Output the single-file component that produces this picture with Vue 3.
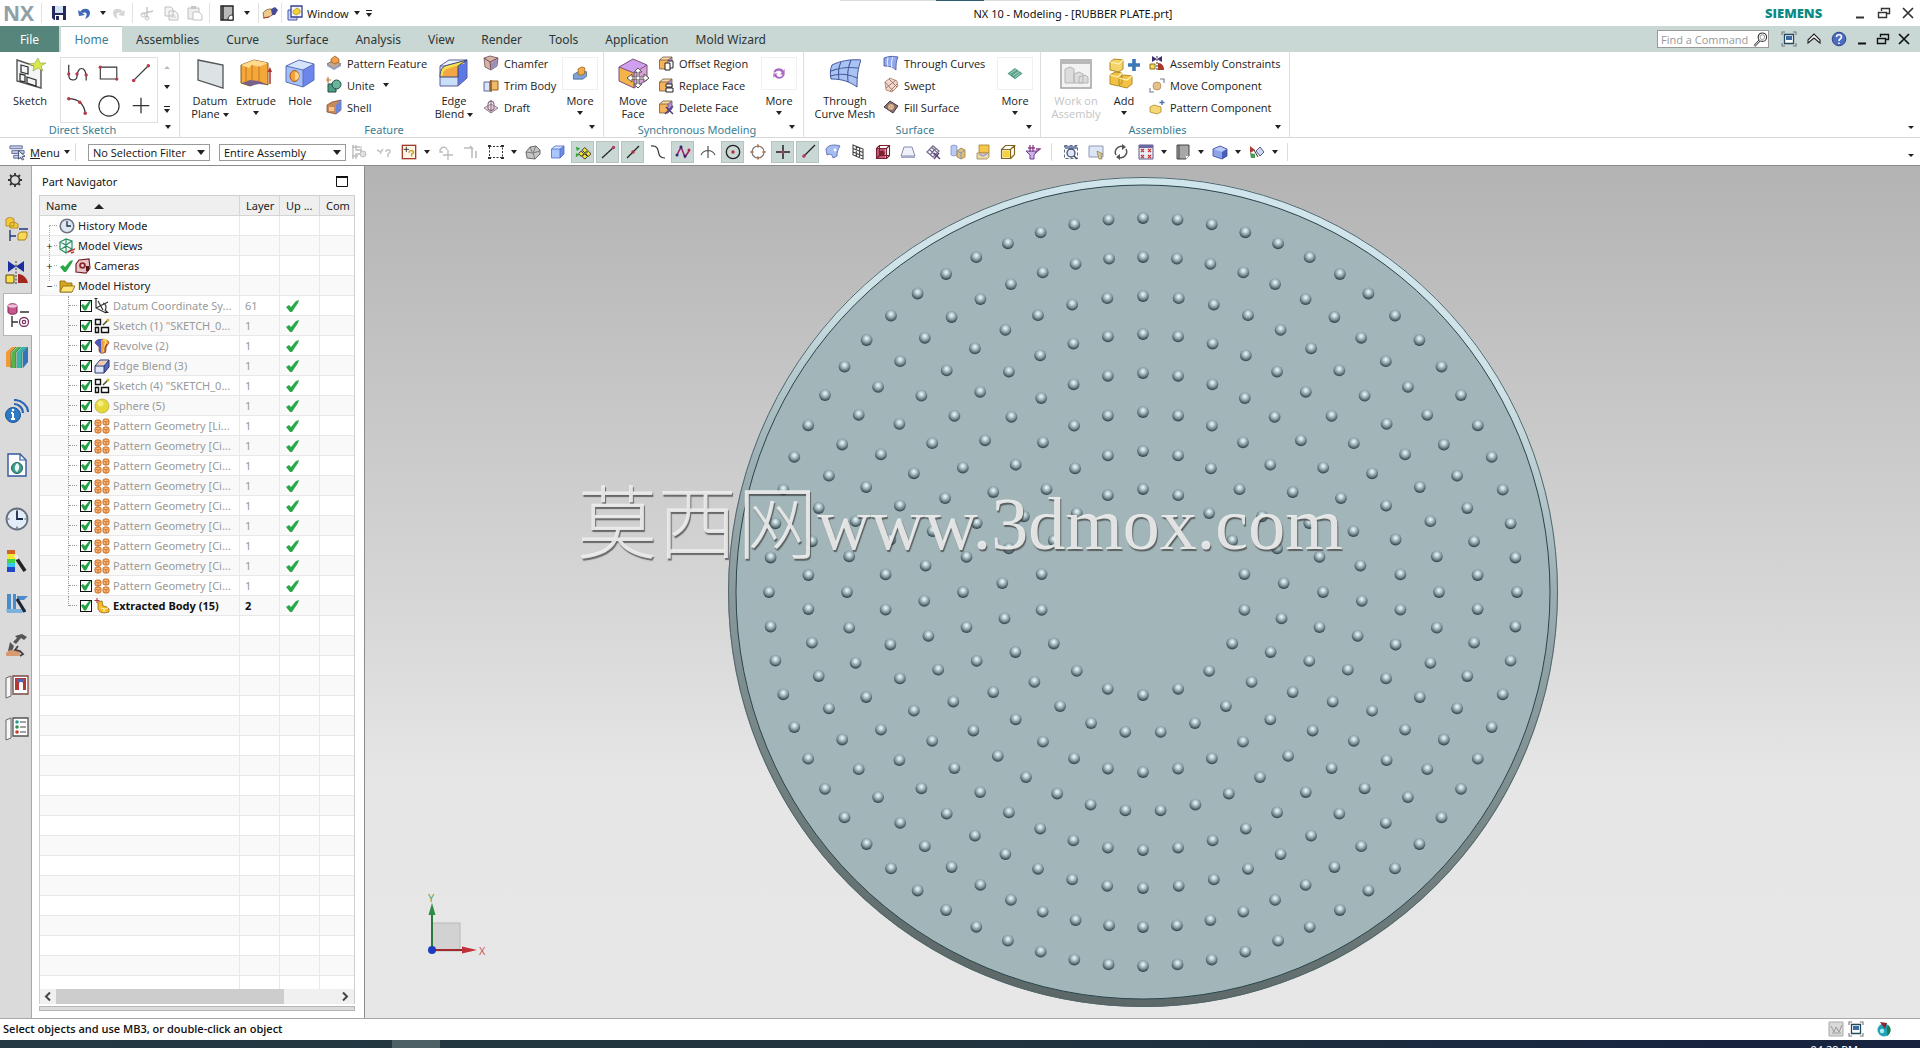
<script setup>
import { h } from 'vue'

const cube = (l, f, r, s = '#5b5f9c') =>
  `<path d="M2 9 11 3h18v18l-9 8H2z" fill="${f}"/><path d="M2 9 11 3h18l-9 6z" fill="${l}"/><path d="M20 9l9-6v18l-9 8z" fill="${r}"/><path d="M2 9 11 3h18v18l-9 8H2zM2 9h18v20M20 9l9-6" fill="none" stroke="${s}" stroke-width="1"/>`
const small = (l, f, r, s = '#6b5a4a') =>
  `<path d="M1.500 5 5 2h9v8l-4 4H1.500z" fill="${f}"/><path d="M1.500 5 5 2h9l-4 3z" fill="${l}"/><path d="M10 5l4-3v8l-4 4z" fill="${r}"/><path d="M1.500 5 5 2h9v8l-4 4H1.500zM1.500 5H10v9M10 5l4-3" fill="none" stroke="${s}" stroke-width=".8"/>`
const st = (c, w = 1) => `fill="none" stroke="${c}" stroke-width="${w}"`
const patternBlob = (x, y) =>
  `<rect x="${x}" y="${y}" width="6" height="6" rx="2" fill="#f9b878" stroke="#c8681c" stroke-width="1"/><path d="M${x + 1} ${y + 2}l2 1 2-1M${x + 3} ${y + 3}v3" ${st('#c8681c', .8)}/>`

// [viewBox size, markup]
const icons = {
  save: [16, `<path d="M1 1h14v14H3l-2-2z" fill="#252a5c"/><path d="M4 1h8v7H4z" fill="#d5e2f5"/><path d="M4 10h8v5H4z" fill="#fff"/><path d="M5 11h3v4H5z" fill="#252a5c"/>`],
  undo: [16, `<path d="M3 7c3-5 10-4 10 1 0 3-2 5-5 6 2-3 3-8-2-6z" fill="#3c66b8"/><path d="M1 5l1 6 6-1z" fill="#3c66b8"/>`],
  redo: [16, `<path d="M13 7c-3-5-10-4-10 1 0 3 2 5 5 6-2-3-2-7 2-6z" fill="#d5d5d5"/><path d="M15 5l-1 6-6-1z" fill="#d5d5d5"/>`],
  cut: [16, `<path d="M2 9l12-3M8 2v11" ${st('#c6c6c6', 1.5)}/><circle cx="4" cy="10" r="2" ${st('#c6c6c6')}/><circle cx="8" cy="13" r="2" ${st('#c6c6c6')}/>`],
  copy: [16, `<path d="M2 2h6l2 2v7H2zM6 6h6l3 3v6H6z" fill="#f5f5f5" stroke="#c0c0c0"/><path d="M8 10h4M8 12h5" ${st('#ccc')}/>`],
  paste: [16, `<path d="M1 3h11v11H1z" fill="#eee" stroke="#c0c0c0"/><path d="M4 1h5v3H4z" fill="#c6c6c6"/><path d="M6 7h6l3 3v5H6z" fill="#fff" stroke="#c0c0c0"/>`],
  book: [16, `<path d="M2 1h12v14H2z" fill="#b9b9b9" stroke="#222" stroke-width="1.400"/><path d="M4 1v14" stroke="#222" stroke-width="1.400"/><path d="M9 15c0-3 1-5 5-5v5z" fill="#fff" stroke="#222"/>`],
  hand: [16, `<path d="M1 8c2-3 5-4 8-4l3 5-5 3-5 1z" fill="#efc98d" stroke="#7a5b30" stroke-width=".8"/><path d="M9 4l4-2 3 3-3 5-3 0z" fill="#4a4a9a"/><path d="M1 13l6-1" stroke="#b04040"/>`],
  window: [16, `<path d="M1 5h9v10H1z" fill="#cdd6ff" stroke="#4655a8"/><path d="M4 1h11v11H4z" fill="#f4f4ff" stroke="#34408c" stroke-width="1.300"/><path d="M6 6l4-3 3 2v3l-4 2-3-2z" fill="#f4d531" stroke="#a98a10" stroke-width=".7"/>`],
  menu: [18, `<path d="M1 2h13v3H1zM3 7h13v3H3zM5 12h8v3H5z" fill="#c4d0ea" stroke="#5b6a94"/><path d="M10 7l7 6-3 .4 1.500 3-1.500.6-1.600-3L10 16z" fill="#e9eef9" stroke="#36435f" stroke-width=".9"/>`],
  grayA: [16, `<path d="M2 1v14M5 1v5h5v4H5v5M1 3h8M1 12h6" ${st('#bdbdbd', 1.4)}/><circle cx="12" cy="10" r="3" fill="#e0e0e0" stroke="#bdbdbd"/><path d="M10 2v5" ${st('#bdbdbd')}/>`],
  grayB: [16, `<path d="M1 6l4 2 2-3M5 8l-1 2M10 8c0-3 5-3 4 0l-2 2v3" ${st('#c4c4c4', 1.5)}/>`],
  picked: [18, `<rect x="1.500" y="1.500" width="15" height="15" fill="#fdf6e7" stroke="#a03c2a" stroke-width="1.500"/><path d="M6 3v6M3 6h6" ${st('#333')}/><path d="M9 10c0-4 6-3 5 0l-2 1v3" ${st('#c8a030', 1.6)}/>`],
  grayPlus: [16, `<path d="M2 8c0-6 7-6 7-2M2 5v3h3M10 6v10M5 11h10" ${st('#bcbcbc', 1.3)}/>`],
  grayBars: [16, `<path d="M1 4h8l-2-2M9 4v3M9 7v7M13 7v7" ${st('#bcbcbc', 1.6)}/>`],
  marquee: [16, `<rect x="1.500" y="2.500" width="13" height="11" fill="none" stroke="#333" stroke-dasharray="2 1.500"/><path d="M0 1h3v2H0zM13 1h3v2h-3zM0 13h3v2H0zM13 13h3v2h-3z" fill="#333"/>`],
  lump: [16, `<path d="M1 8l4-5 6-1 4 4v4l-5 5-8-1z" fill="#c4c4c4" stroke="#5e5e5e" stroke-width=".9"/><path d="M1 8l7 1 3-7M8 9l2 6M8 9l7-2M5 3l2 5" ${st('#5e5e5e', .7)}/>`],
  blueCube: [16, small('#d8e6ff', '#a9c6ff', '#6d8cea', '#4a69c4')],
  snap: [18, `<path d="M1 3l5 2-4 3zM1 10l4 2-4 3z" fill="#2ea836"/><path d="M11 4l3 3-3 3-3-3zM7 8l3 3-3 3-3-3zM15 8l3 3-3 3-3-3zM11 11l3 3-3 3-3-3z" fill="#f6e52c" stroke="#222" stroke-width="1"/>`],
  seg: [16, `<path d="M2 14L14 3" ${st('#222', 1.2)}/><circle cx="13.500" cy="3.500" r="1.700" fill="#b04060"/>`],
  mid: [16, `<path d="M2 14L14 2" ${st('#222', 1.2)}/><circle cx="8" cy="8" r="1.700" fill="#b03040"/>`],
  scurve: [16, `<path d="M1 2c12-1 3 12 14 12" ${st('#333', 1.2)}/>`],
  spline: [16, `<path d="M2 11L6 3l4 10 4-6" ${st('#a02070', 1.6)}/><circle cx="2" cy="11" r="1.500" fill="#2b2b7a"/><circle cx="6" cy="3" r="1.500" fill="#2b2b7a"/><circle cx="10" cy="12" r="1.500" fill="#2b2b7a"/><circle cx="14" cy="6" r="1.500" fill="#b02050"/>`],
  inter: [16, `<path d="M1 11c3-6 11-6 14 0M8 2v12" ${st('#444', 1.1)}/>`],
  target: [16, `<circle cx="8" cy="8" r="6.700" ${st('#222', 1.3)}/><circle cx="8" cy="8" r="1.700" fill="#b03040"/>`],
  quad: [16, `<circle cx="8" cy="8" r="6" ${st('#777', 1.2)}/><path d="M8 .5v3M8 12.500v3M.5 8h3M12.500 8h3" ${st('#b87858', 2)}/>`],
  plus: [16, `<path d="M8 1v14M1 8h14" ${st('#222', 1.5)}/><circle cx="8" cy="8" r="1.500" fill="#b04060"/>`],
  onCurve: [16, `<path d="M3 13L15 1" ${st('#222', 1.2)}/><circle cx="4" cy="12" r="1.800" fill="#b04060"/>`],
  sheet: [16, `<path d="M1 5c2-4 8-5 14-3-2 3-3 6-3 10l-4 2c0-3-3-5-6-3z" fill="#a7bcf0" stroke="#5a6db0" stroke-width=".9"/><circle cx="10" cy="6" r="1.400" fill="#fff"/>`],
  mesh: [16, `<path d="M3 1l10 4v10L3 11zM6.300 2.500v10M9.600 4v10M3 4.500l10 4M3 8l10 4" ${st('#444', 1.1)}/>`],
  box: [16, `<path d="M1.500 4.500h9v10h-9z" fill="#c35a78"/><path d="M1.500 4.500h10v10h-10zM4.500 1.500h10v10h-10zM1.500 4.500l3-3M11.500 4.500l3-3M1.500 14.500l3-3M11.500 14.500l3-3" ${st('#7a2030', 1.1)}/><circle cx="7" cy="9" r="2.500" fill="#7a2030"/>`],
  slab: [16, `<path d="M4 3h8l3 9H1z" fill="#eef0fa" stroke="#8a8fae"/><path d="M1 12h14v2H1z" fill="#a6abca"/>`],
  weave: [16, `<path d="M2 8l6-6 6 5-6 6zM4 5l7 7M6 3l7 6M5 11l6-7" ${st('#7b6f92', 1.3)}/><path d="M9 9l6 6M14 9l-5 6" ${st('#5a3d77', 1.3)}/>`],
  blocks: [16, `<path d="M1 2l3-1 3 1v9l-3 1-3-1z" fill="#b9caf5" stroke="#7d8fc8" stroke-width=".8"/><path d="M7 7l4-3 4 2v7l-4 2-4-2z" fill="#ddc07d" stroke="#9f7f2f" stroke-width=".8"/><path d="M7 7l4 2 4-3M11 9v6" ${st('#7d8fc8', .9)}/>`],
  stamp: [16, `<path d="M4 1h10v8H4z" fill="#f4c64a" stroke="#a6812a" stroke-width=".8"/><path d="M2 9h12v4l-2 2H2z" fill="#e9dcae" stroke="#a0874a" stroke-width=".8"/><path d="M4 10l4 2 5-3" ${st('#b09ad0', 1.5)}/>`],
  yBox: [16, `<path d="M1.500 5.500h9v9h-9z" fill="#f7e7a8"/><path d="M1.500 5.500h9v9h-9zM5.500 1.500h9v9M1.500 5.500l4-4h9l-4 4M10.500 14.500l4-4" ${st('#80661c', 1.2)}/><path d="M3 7h6v6H3z" fill="#f5d23c"/>`],
  funnel: [16, `<path d="M1 7h11l-3 4v4H5v-4z" fill="#d0b3e8" stroke="#6c3f96"/><path d="M5 1v7M8 1v7M3 4h7M10 9l5-4h-4" ${st('#8a3f86', 1.3)}/>`],
  fit: [16, `<path d="M1.500 1.500h13v13h-13z" ${st('#5f6a80', 1)} stroke-dasharray="3 2"/><path d="M2 2h12v3H2z" fill="#7d8bb0"/><circle cx="8" cy="9" r="4" fill="#dfe8fb" stroke="#44506d" stroke-width="1.300"/><path d="M11 12l3 3" ${st('#44506d', 1.6)}/>`],
  zoomBox: [16, `<path d="M1 2h14v11H1z" fill="#dde6f7" stroke="#8d98b5"/><path d="M9 7l6 3-2 1 1 4-3 0-1-3z" fill="#d7c79c" stroke="#8b7c4c" stroke-width=".7"/>`],
  rotate: [16, `<path d="M3 11A6 6 0 0 1 10 2.500M13 5A6 6 0 0 1 6 13.500" ${st('#555', 1.5)}/><path d="M9 0l4 3-4 3zM7 10l-4 3 4 3z" fill="#555"/>`],
  views: [16, `<path d="M1 1h14v14H1z" fill="#eceef8" stroke="#5d5a86"/><path d="M1 1h14v3H1z" fill="#6a69a4"/><path d="M3 5l3 3M6 5L3 8M10 5l3 3M13 5l-3 3M3 11l3 3M6 11l-3 3M10 11l3 3M13 11l-3 3" ${st('#c03838', 1.4)}/>`],
  style: [16, `<path d="M2 1h12v11l-3 3H2z" fill="#a8a8a8" stroke="#444"/><path d="M4 1v14" stroke="#444"/><path d="M11 15l3-3h-3z" fill="#fff"/>`],
  shaded: [16, `<path d="M1 5l7-3 7 3v7l-5 3-9-3z" fill="#8ca3e8"/><path d="M1 5l7-3 7 3-5 3z" fill="#b9c8f8"/><path d="M10 8l5-3v7l-5 3z" fill="#4a5fbd"/><path d="M1 5l7-3 7 3v7l-5 3-9-3z" ${st('#35459a', .8)}/>`],
  clip: [16, `<path d="M1 2l5 4-5 3z" fill="#b33a3a"/><path d="M1 9l5 1v4H2z" fill="#4a9a56"/><path d="M5 6l4 7" ${st('#333')}/><path d="M7 7l4-4 4 5-4 4z" fill="#cfd8ee" stroke="#54608a"/>`],

  sketch: [32, `<path d="M3 3l24 8v20L3 24z" fill="#f4f5f6" stroke="#555" stroke-width="1.400"/><path d="M7 8l7 2v7l-7-2zM6 17l5 1v7l-5-1zM13 20l9 3v6l-9-3z" ${st('#333', 1.3)}/><path d="M24 1l2 5 6 0-5 3 2 5-5-3-5 3 1-5-5-2 6-1z" fill="#d9e84e" stroke="#8da23a" stroke-width=".6"/>`],
  datum: [32, `<path d="M4 3l25 5v23L4 23z" fill="#dde2e4" stroke="#4f5558" stroke-width="1.300"/>`],
  extrude: [32, `<path d="M1 8l13-5 14 3v22l-9-3-9 4-9-3z" fill="#f5a83a" stroke="#7b4c12" stroke-width=".9"/><path d="M1 8l13-5 14 3-9 4-7-2-3 3z" fill="#ffd98c"/><path d="M2 26l8-3 9 1 8 4-8-1-9 2z" fill="#77608c"/><path d="M6 10v15M12 8v16M19 9v16" ${st('#c2761b')}/><path d="M30 27V14" ${st('#b03030', 1.5)}/><path d="M27.500 15L30 10l2 5z" fill="#b03030"/>`],
  hole: [32, `<path d="M2 9l13-6 15 4v16l-11 7-17-5z" fill="#a4bffb"/><path d="M2 9l13-6 15 4-11 6z" fill="#d4e4ff"/><path d="M19 13l11-6v16l-11 7z" fill="#6c86ec"/><path d="M2 9l13-6 15 4v16l-11 7-17-5zM2 9l17 4v17M19 13l11-6" ${st('#5b6fb4')}/><ellipse cx="10.500" cy="19" rx="4.500" ry="5.500" fill="#f5a13a" stroke="#a05a10"/><path d="M11 15v8a4 4 0 0 0 0-8" fill="#ffd58c"/>`],
  edge: [32, cube('#eef4ff', '#c9def9', '#5a78e6') + `<path d="M2 20c0-8 3-11 8-12l19-5c-4 1-8 5-9 9v8z" fill="#f3a644"/><path d="M3 19c0-5 2-8 7-9l16-5" ${st('#f6e04c', 3)}/><path d="M2 20h18V9l9-6M2 20c0-8 3-11 8-12l19-5" ${st('#39477f', 1)}/>`],
  patternFeature: [16, `<path d="M1 9l7-4 7 4-7 5z" fill="#c4a88e" stroke="#6c5a48" stroke-width=".8"/><path d="M5 4l4-3 4 3v3l-4 2-4-2z" fill="#f0a04a" stroke="#8a5520" stroke-width=".7"/><path d="M1 9v2l7 4 7-4V9l-7 4z" fill="#8ea0c6"/>`],
  unite: [16, `<path d="M2 7h8v8H2z" fill="#4f9c86" stroke="#1f4f43"/><circle cx="10.500" cy="7.500" r="4.500" fill="#6cb39c" stroke="#1f4f43"/><path d="M2 0v6M0 3h5" ${st('#c07838', 1.2)}/>`],
  shell: [16, `<path d="M1 6l5-3 9-2v10l-5 4-9-2z" fill="#c9885a" stroke="#6c4328" stroke-width=".7"/><path d="M10 6l5-5v10l-5 4z" fill="#6b86d8"/><path d="M3 8h5v4H3z" fill="#f5c58a"/>`],
  chamfer: [16, `<path d="M1 3l6-2 8 2-1 8-6 4-6-3z" fill="#d7b3a2" stroke="#6b4b5a" stroke-width=".8"/><path d="M1 3l6 4 8-4M7 7l1 8" ${st('#6b4b5a', 1)}/><path d="M8 8l6-4v7l-6 4z" fill="#9a90b8"/>`],
  trim: [16, `<path d="M1 5h6v9H1z" fill="#dce5fb" stroke="#5a6799"/><path d="M7 4h8v9H7z" fill="#f3b96a" stroke="#95601a"/><path d="M8 3v12" ${st('#7c5b2a', 1.5)}/>`],
  draft: [16, `<path d="M1 9l7-4 7 4-7 5z" fill="#e7d7df" stroke="#8c7384" stroke-width=".9"/><path d="M8 1v13M5 5c1-4 5-4 6 0v5l-3 2-3-2z" ${st('#8c6b85', 1.1)}/>`],
  moreFeature: [16, `<path d="M1 9l5-3h9v5l-4 3H1z" fill="#7fa3d6" stroke="#3f5f96" stroke-width=".8"/><path d="M6 3l4-2 3 1v6l-4 2-3-1z" fill="#f2aa4c" stroke="#9a6010" stroke-width=".8"/>`],
  moveFace: [32, `<path d="M2 10L16 2l14 6-13 8z" fill="#cfa0ef"/><path d="M2 10l15 6v15L2 24z" fill="#f4b44c"/><path d="M17 16l13-8v15l-13 8z" fill="#d9a2d6"/><path d="M2 10L16 2l14 6v15l-13 8-15-7zM2 10l15 6v15M17 16l13-8" ${st('#7b4d7c')}/><path d="M21 11l4 4h-3v5h5v-3l5 4-5 4v-3h-5v5h3l-4 4-4-4h3v-5h-5v3l-5-4 5-4v3h5v-5h-3z" fill="#fff" stroke="#555"/>`],
  offset: [16, small('#ffd9a0', '#f6b45a', '#b58ed8') + `<path d="M7 8h5v7H7zM10 6h5v7h-3" fill="#fff" stroke="#222"/>`],
  replace: [16, small('#ffd9a0', '#f6b45a', '#b58ed8') + `<path d="M8 7h6v3H8zM8 11h7v4H8z" fill="#fff" stroke="#222"/>`],
  del: [16, small('#ffd9a0', '#f6b45a', '#b58ed8') + `<path d="M8 8l7 7M15 7l-8 8" ${st('#54408c', 1.6)}/>`],
  moreSync: [16, `<path d="M2 7c1-5 8-6 11-2l1-2v6H9l2-2c-2-3-6-2-7 0zM14 9c-1 5-8 6-11 2l-1 2V8h5l-2 1c2 4 6 3 7 0z" fill="#a868c4"/>`],
  curveMesh: [32, `<path d="M3 8c8-4 18-6 29-5-3 8-4 16-4 27-7-5-14-8-26-8-1-4-1-10 1-14z" fill="#a9c3f5" stroke="#475a9a"/><path d="M12 5c-3 6-3 12-2 18M22 3c-3 7-4 14-3 22M2 14c10-4 19-4 27-3M1 19c10-3 19-2 27 2" ${st('#475a9a', 1.1)}/>`],
  thruCurves: [16, `<path d="M1 3c5-2 9-2 14-1-2 4-2 8-2 13-3-3-7-4-12-4z" fill="#90a8ea" stroke="#4d5f9f" stroke-width=".9"/><path d="M5 2.500c-1 3-1 6 0 9M10 2c-2 4-2 7-1 11" ${st('#e6ecff', 1.1)}/>`],
  swept: [16, `<path d="M2 5l5-4 7 3 1 5-6 6-6-2z" fill="#efd9cf" stroke="#a87a68" stroke-width=".8"/><path d="M2 5l8 9M6 2l8 8M3 11L13 3M7 14l7-7" ${st('#a87a68', 1)}/>`],
  fill: [16, `<path d="M1 8l6-6 8 5-5 7z" fill="#8a6f6b" stroke="#4c3c4a"/><circle cx="8" cy="8" r="3" fill="#d6b48a"/>`],
  moreSurface: [16, `<path d="M0 8l8-6 8 6-8 6z" fill="#57a187"/><path d="M3 8l6-4M6 10l6-4M8 12l5-4" ${st('#c3e5d7', .9)}/>`],
  workOn: [32, `<path d="M1 3h30v28H1z" fill="#f3f3f3" stroke="#a3a3a3" stroke-width="1.500"/><path d="M1 3h30v4H1z" fill="#b9b9b9"/><path d="M5 12l5-2 4 2v14H5zM14 17l5-2 4 2v9h-9zM19 20l6-2 3 2v6h-9z" fill="#dcdcdc" stroke="#b5b5b5"/>`],
  add: [32, `<path d="M2 5l4-3 9 1v9l-4 3-9-2z" fill="#f3d36a" stroke="#b38a24"/><path d="M2 18l5-3 7 1v10l-4 3-8-2zM11 21l5-3 8 1v8l-5 4-8-2z" fill="#f2c244" stroke="#b38a24"/><path d="M2 5l9 2 4-4M2 18l8 2 4-4M11 21l8 2 5-4" ${st('#fff3b8', 1.2)}/><path d="M26 2v12M20 8h12" ${st('#3a78b8', 3.6)}/>`],
  constraints: [16, `<path d="M3 1v6l5-3zM13 1v6L8 4z" fill="#3c3072"/><path d="M1 9h5v5H1z" fill="#f6dc60" stroke="#8a6d1a"/><path d="M9 8v7h6c0-4-2-7-6-7z" fill="#a33a2c"/><path d="M8 1v14" stroke="#333" stroke-dasharray="2 1"/>`],
  moveComp: [16, `<circle cx="8" cy="9" r="4" fill="#e8c08a" stroke="#b08a5a" stroke-width=".8"/><path d="M11 2h4v4M1 11v4h4" ${st('#707a90', 1.1)}/>`],
  patternComp: [16, `<path d="M1 8l4-2 7 2v5l-4 2-7-2z" fill="#f4d878" stroke="#b08a2a" stroke-width=".8"/><path d="M13 1v5M10.500 3.500h5" ${st('#4a6fa8', 1.3)}/>`],

  profile: [24, `<path d="M3 2v11c0 7 8 7 9 2 0-12 10-12 10 0v4" ${st('#333', 1.3)}/><circle cx="3" cy="12" r="1.800" fill="#b83a4a"/><circle cx="12" cy="12" r="1.800" fill="#b83a4a"/><circle cx="22" cy="13" r="1.800" fill="#b83a4a"/>`],
  rect: [24, `<path d="M2.500 4.500h18v13h-18z" ${st('#333', 1.2)}/><circle cx="2.500" cy="4.500" r="1.800" fill="#b83a4a"/><circle cx="20.500" cy="17.500" r="1.800" fill="#b83a4a"/>`],
  line: [24, `<path d="M4 19L20 3" ${st('#333', 1.2)}/><circle cx="4" cy="19" r="1.900" fill="#b83a4a"/><circle cx="20" cy="3" r="1.900" fill="#b83a4a"/>`],
  arc: [24, `<path d="M3 4c10 0 17 6 18 16" ${st('#333', 1.3)}/><circle cx="3" cy="4" r="1.900" fill="#b83a4a"/><circle cx="15" cy="8" r="1.900" fill="#b83a4a"/><circle cx="21" cy="20" r="1.900" fill="#b83a4a"/>`],
  circle: [24, `<circle cx="12" cy="12" r="11" ${st('#333', 1.3)}/>`],
  cross: [24, `<path d="M12 3v17M3 11.500h18" ${st('#333', 1.4)}/>`],

  gear: [16, `<circle cx="8" cy="8" r="4.500" ${st('#333', 1.6)}/><path d="M8 1v2.500M8 12.500V15M1 8h2.500M12.500 8H15M3 3l2 2M11 11l2 2M13 3l-2 2M5 11l-2 2" ${st('#333', 1.8)}/>`],
  asmNav: [24, `<path d="M1 2l4-2 4 2v7H1zM5 6l4-1 4 2v4H5z" fill="#f4c93c" stroke="#a8801a" stroke-width=".8"/><path d="M14 12h9M5 13v11M5 19h6" ${st('#253a7a', 1.4)}/><path d="M13 17l3-2h6v5l-2 3h-7z" fill="#f7d95a" stroke="#a8801a"/>`],
  conNav: [24, `<path d="M3 1v11l8-5.500zM19 1v11l-8-5.500z" fill="#1b2fa0"/><path d="M11 1v23" stroke="#333" stroke-dasharray="2 1.500"/><path d="M1 15h8v8H1z" fill="#f7dc4c" stroke="#5a4a10"/><path d="M13 14v9h10c-1-5-5-9-10-9z" fill="#a3261c"/>`],
  partNav: [24, `<path d="M1 3c0-3 9-3 9 0v6c0 3-9 3-9 0z" fill="#c6578c" stroke="#7a1f50"/><ellipse cx="5.500" cy="3" rx="4.500" ry="1.700" fill="#eec0d8"/><path d="M13 9h9M5 13v11M5 19h6" ${st('#333', 1.4)}/><circle cx="17" cy="19" r="4.500" ${st('#7a3060', 1.3)}/><circle cx="17" cy="19" r="1.700" ${st('#7a3060', 1.2)}/>`],
  reuse: [24, `<path d="M1 6l6-5h4L6 6v15H1z" fill="#f29a38"/><path d="M7 6l5-5h4l-5 5v16H6z" fill="#58b24a"/><path d="M12 6l5-5h6l-6 5v16h-5z" fill="#38b5a8"/><path d="M18 6l5-5v15l-5 6z" fill="#3373bd"/><path d="M6 6v16M11 6v16M17 6v16M6 6l5-5M11 6l5-5M17 6l6-5" ${st('#2c6a5c', .7)}/>`],
  info: [24, `<circle cx="8" cy="16" r="7.500" fill="#2c7ac4" stroke="#1c5592"/><path d="M8 14v6M6 14h2M6 20h4" ${st('#fff', 2)}/><circle cx="8" cy="11" r="1.300" fill="#fff"/><path d="M9 5c5 0 9 4 9 9M9 1c8 0 14 6 14 12" ${st('#2c64b0', 2.2)}/>`],
  page: [24, `<path d="M3 1h12l6 6v16H3z" fill="#fdfdff" stroke="#31589c" stroke-width="1.400"/><path d="M15 1v6h6" ${st('#31589c', 1.2)}/><circle cx="12" cy="15" r="5.500" fill="#3b9f8c" stroke="#20635a"/><path d="M12 10c3 2 3 6 0 9-3-2-3-6 0-9z" fill="#e9f7ef"/>`],
  clock: [24, `<circle cx="12" cy="12" r="10.500" fill="#e3edf9" stroke="#66707e" stroke-width="1.800"/><path d="M12 4v8h6" ${st('#1c2a4a', 1.8)}/><path d="M12 2.500v2M12 19.500v2M2.500 12h2M19.500 12h2" ${st('#555', 1.2)}/>`],
  palette: [24, `<path d="M2 1h8v4H2z" fill="#cf6426"/><path d="M2 5h8v5H2z" fill="#f5e632"/><path d="M2 10h8v4H2z" fill="#43d447"/><path d="M2 14h8v4H2z" fill="#35c8ee"/><path d="M2 18h8v5H2z" fill="#2447c8"/><path d="M12 10l8 12" ${st('#222', 3.6)}/><path d="M10 6l3 4" ${st('#eee', 3)}/>`],
  tool: [24, `<path d="M2 3h4v15H2zM8 3h3v15H8zM12 5h11l-4 4h-7z" fill="#4a8ccc"/><path d="M1 18h20l-4 4H2z" fill="#7eb0dc"/><path d="M12 8l8 13" ${st('#1c2634', 3.2)}/>`],
  process: [24, `<path d="M10 3l7-2 5 3-3 3-3-2-5 6-3-2 4-4zM5 9l4 4-2 5H3z" fill="#555"/><path d="M1 20c4-5 7-1 9-4l6 2-2 5H1z" fill="#d99a72"/><path d="M13 13l-3 4 5 1 3 3-3 2" ${st('#444', 1.8)}/>`],
  roleA: [24, `<path d="M1 3l5-2v20l-5 2z" fill="#f7f7f7" stroke="#666"/><path d="M8 1h15v18H8z" fill="#fff" stroke="#7a4a40" stroke-width="1.300"/><path d="M10 3h11v12h-3V8l-2-2-2 2v7h-4z" fill="#b23838"/><path d="M12 4h7v3h-7z" fill="#4568b8"/>`],
  roleB: [24, `<path d="M1 3l5-2v20l-5 2z" fill="#f7f7f7" stroke="#666"/><path d="M8 1h15v18H8z" fill="#fff" stroke="#555" stroke-width="1.300"/><circle cx="12" cy="5" r="1.800" fill="#2c9a8a"/><circle cx="12" cy="10" r="1.800" fill="#308e4a"/><circle cx="12" cy="15" r="1.800" fill="#c23c2c"/><path d="M15 5h6M15 10h6M15 15h6" ${st('#444', 1.2)}/>`],

  history: [16, `<circle cx="8" cy="8" r="6.800" fill="#dfe7f3" stroke="#6c747e" stroke-width="1.600"/><path d="M8 3v5h4" ${st('#1f2d4a', 1.3)}/>`],
  modelViews: [16, `<path d="M1 4l6-3 6 2v8l-6 4-6-4zM1 4l6 3 6-4M7 7v8M1 12l6-4 6 3M7 1v6" ${st('#2b9066', 1.2)}/><path d="M9 14l7-3M12 15l3-1" ${st('#c03838', 1.4)}/>`],
  camera: [16, `<path d="M1 6l3-4 10-1 1 9-4 5-10-1z" fill="#e8c6c6" stroke="#722028" stroke-width="1.200"/><circle cx="7.500" cy="7.500" r="3.300" fill="#8a2a34"/><circle cx="7.500" cy="7.500" r="1.400" fill="#f0dada"/><path d="M11 8h3v5h-3z" fill="#54161e"/>`],
  folder: [16, `<path d="M1 3h5l1 2h6v9H1z" fill="#d8a51e" stroke="#86650f" stroke-width=".8"/><path d="M4 8h12l-3 6H1z" fill="#ffe478" stroke="#86650f" stroke-width=".8"/>`],
  csys: [16, `<path d="M2 1v9l10 5M2 10l12-6M4 3l5 9M9 5c3 1 4 4 2 8" ${st('#333', 1.2)}/><path d="M0 1h4l-2-2zM12 12l3 3h-4z" fill="#222"/>`],
  sketchSmall: [16, `<path d="M1.500 1.500h5v5h-5zM1.500 9.500h3v5h-3zM7.500 9.500h7v5h-7z" ${st('#111', 1.4)}/><path d="M9 7l5-5" ${st('#4a4a20', 1.5)}/><circle cx="14" cy="2" r="1.500" fill="#d8b834"/>`],
  revolve: [16, `<path d="M1 5c0-5 14-5 14 0l-3 4v4c-2 3-6 3-7 0V9z" fill="#f0a040" stroke="#8a4a1a" stroke-width=".8"/><path d="M2 3c2-2 3-2 5-2v14c-1 0-2-1-2-2V9L1 5z" fill="#4a58c0"/><path d="M9 2h3l-2 12" ${st('#ffe26a', 1.6)}/><path d="M13 6l-2 4v5" ${st('#a03030', 1.2)}/>`],
  edgeSmall: [16, `<path d="M1 8l5-6h9v7l-5 6H1z" fill="#dfe6fb"/><path d="M10 8l5-6v7l-5 6z" fill="#5266c8"/><path d="M2 7l5-4h6l-4 4z" fill="#f3c9a8"/><path d="M1 8l5-6h9v7l-5 6H1zM1 8h9v7M10 8l5-6" ${st('#2c3566', 1)}/>`],
  sphere: [16, `<circle cx="8" cy="8" r="7" fill="#e6d83a" stroke="#a89c28" stroke-width=".6"/><circle cx="6.500" cy="5.500" r="3" fill="#f4ee80"/>`],
  pattern: [16, patternBlob(1, 2) + patternBlob(9, 1) + patternBlob(1, 9) + patternBlob(9, 9)],
  extracted: [16, `<path d="M4 4l4-1 1 5 4 1 2 2v3l-5 1-4-1-2-3z" fill="#f5bd2e" stroke="#95690c" stroke-width=".8"/><path d="M7 10l4 1 3-1M10 11v3" ${st('#fff0a8', 1.1)}/><path d="M3 0v5M.5 2.500h5" ${st('#b03a3a', 1.1)}/>`],
  tick: [14, `<path d="M1 8l3-2 2 2 5-6 3-1-1 3-6 9H5z" fill="#2aa84a"/>`],

  lens: [16, `<circle cx="10" cy="5.500" r="4.500" fill="#fff" stroke="#333" stroke-width="1.200"/><circle cx="10" cy="5.500" r="2.500" ${st('#777', .8)}/><path d="M7 9l-5.500 6" ${st('#333', 2.4)}/><path d="M7 9l-5.300 5.800" ${st('#fff', 1)}/>`],
  fullscreen: [16, `<path d="M1 4V1h3M12 1h3v3M15 12v3h-3M4 15H1v-3" ${st('#777', 1.1)}/><path d="M3.500 3.500h9v9h-9z" fill="#fff" stroke="#234a5c" stroke-width="1.300"/><path d="M5 5h6v4H5z" fill="#3d6da0"/>`],
  up: [16, `<path d="M2 9l6-6 6 6v3L8 7l-6 5z" fill="#fff" stroke="#222" stroke-width="1.100"/>`],
  help: [16, `<circle cx="8" cy="8" r="6.800" fill="#4b6cc0" stroke="#2e4688"/><path d="M5.500 6c0-3 5-3 5 0 0 2-2.500 1.500-2.500 4M8 11.500v1.500" ${st('#fff', 1.6)}/>`],
  min: [14, `<path d="M3 11.500h8" ${st('currentColor', 2)}/>`],
  restore: [14, `<path d="M4.500 5V2.500h8v5H10M1.500 6.500h8v5h-8z" ${st('currentColor', 1.4)}/>`],
  close: [14, `<path d="M2 2l10 10M12 2L2 12" ${st('currentColor', 1.7)}/>`],
  maximize: [14, `<path d="M1.500 1.500h11v10h-11z" ${st('#111', 1)}/><path d="M1 2h12" ${st('#111', 2)}/>`],
  grayTile: [16, `<path d="M1 1h14v14H1z" fill="#d9d9d9" stroke="#aaa"/><path d="M3 5l3 6 2-5 3 5 3-7M4 12h9" ${st('#999', 1)}/>`],
  globe: [16, `<circle cx="8" cy="9" r="6.500" fill="#1fa3b8"/><path d="M12 4c4 3 3 9-1 11 1-4-1-7 1-11z" fill="#1c7a4a"/><path d="M4 1l5 7 2-6z" fill="#8e2430"/><circle cx="6" cy="10" r="2.200" fill="#b5ecf2"/>`],
}

const Glyph = ({ name, size }) => {
  const [box, body] = icons[name]
  return h('svg', {
    width: size || box, height: size || box, viewBox: `0 0 ${box} ${box}`, 'aria-hidden': 'true', innerHTML: body,
  })
}
Glyph.props = ['name', 'size']

const tabs = ['Assemblies', 'Curve', 'Surface', 'Analysis', 'View', 'Render', 'Tools', 'Application', 'Mold Wizard']

const groups = [
  { key: 'feature', label: 'Feature', cols: [
    { icon: 'datum', lines: ['Datum', 'Plane'], drop: 'inline' },
    { icon: 'extrude', lines: ['Extrude'], drop: 'below' },
    { icon: 'hole', lines: ['Hole'] },
    { list: [['patternFeature', 'Pattern Feature'], ['unite', 'Unite', true], ['shell', 'Shell']] },
    { icon: 'edge', lines: ['Edge', 'Blend'], drop: 'inline' },
    { list: [['chamfer', 'Chamfer'], ['trim', 'Trim Body'], ['draft', 'Draft']] },
    { icon: 'moreFeature', lines: ['More'], drop: 'below', framed: true },
  ] },
  { key: 'sync', label: 'Synchronous Modeling', cols: [
    { icon: 'moveFace', lines: ['Move', 'Face'] },
    { list: [['offset', 'Offset Region'], ['replace', 'Replace Face'], ['del', 'Delete Face']] },
    { icon: 'moreSync', lines: ['More'], drop: 'below', framed: true },
  ] },
  { key: 'surface', label: 'Surface', cols: [
    { icon: 'curveMesh', lines: ['Through', 'Curve Mesh'] },
    { list: [['thruCurves', 'Through Curves'], ['swept', 'Swept'], ['fill', 'Fill Surface']] },
    { icon: 'moreSurface', lines: ['More'], drop: 'below', framed: true },
  ] },
  { key: 'assemblies', label: 'Assemblies', cols: [
    { icon: 'workOn', lines: ['Work on', 'Assembly'], disabled: true },
    { icon: 'add', lines: ['Add'], drop: 'below' },
    { list: [['constraints', 'Assembly Constraints'], ['moveComp', 'Move Component'], ['patternComp', 'Pattern Component']] },
  ] },
]

const gallery = ['profile', 'rect', 'line', 'arc', 'circle', 'cross']

const selectTools = ['grayA', 'grayB', 'picked', '^', 'grayPlus', 'grayBars', 'marquee', '^', 'lump', 'blueCube',
  '*snap', '*seg', '*mid', 'scurve', '*spline', 'inter', '*target', 'quad', '*plus', '*onCurve', 'sheet', 'mesh',
  'box', 'slab', 'weave', 'blocks', 'stamp', 'yBox', 'funnel', '|', 'fit', 'zoomBox', 'rotate', 'views', '^',
  'style', '^', 'shaded', '^', 'clip', '^', '|']

const rail = [
  { key: 'top', items: ['gear'] },
  { key: 'nav', items: ['asmNav', 'conNav', 'partNav', 'reuse'] },
  { key: 'web', items: ['info', 'page', 'clock'] },
  { key: 'roles', items: ['palette', 'tool', 'process', 'roleA', 'roleB'] },
]

const roots = [
  { name: 'History Mode', icon: 'history' },
  { name: 'Model Views', icon: 'modelViews', sign: '+' },
  { name: 'Cameras', icon: 'camera', sign: '+', ticked: true },
  { name: 'Model History', icon: 'folder', sign: '−' },
]
const features = [
  { name: 'Datum Coordinate Sy...', icon: 'csys', layer: 61 },
  { name: 'Sketch (1) "SKETCH_0...', icon: 'sketchSmall', layer: 1 },
  { name: 'Revolve (2)', icon: 'revolve', layer: 1 },
  { name: 'Edge Blend (3)', icon: 'edgeSmall', layer: 1 },
  { name: 'Sketch (4) "SKETCH_0...', icon: 'sketchSmall', layer: 1 },
  { name: 'Sphere (5)', icon: 'sphere', layer: 1 },
  { name: 'Pattern Geometry [Li...', icon: 'pattern', layer: 1 },
  ...Array.from({ length: 8 }, () => ({ name: 'Pattern Geometry [Ci...', icon: 'pattern', layer: 1 })),
  { name: 'Extracted Body (15)', icon: 'extracted', layer: 2, current: true },
]
const blankRows = 30

// Concentric circular patterns: [radius, instance count]
const rings = [[374, 68], [335, 62], [296, 52], [258, 46], [219, 39], [180, 32], [141, 25], [103, 18]]
const bumps = rings.flatMap(([r, n]) =>
  Array.from({ length: n }, (_, i) => {
    const a = (i * 2 * Math.PI) / n
    return { x: Math.round((416 + r * Math.sin(a)) * 10) / 10, y: Math.round((416 - r * Math.cos(a)) * 10) / 10 }
  }))
</script>

<template>
  <div class="app">
    <header class="titlebar">
      <span class="top-strip"><i></i></span>
      <div class="quick">
        <strong class="nx">NX</strong>
        <i class="sep"></i>
        <button class="q wide" aria-label="Save"><Glyph name="save" /></button>
        <button class="q" aria-label="Undo"><Glyph name="undo" /></button>
        <i class="caret"></i>
        <button class="q" aria-label="Redo"><Glyph name="redo" /></button>
        <i class="sep"></i>
        <button class="q" aria-label="Cut"><Glyph name="cut" /></button>
        <button class="q" aria-label="Copy"><Glyph name="copy" /></button>
        <button class="q" aria-label="Paste"><Glyph name="paste" /></button>
        <i class="sep"></i>
        <button class="q wide" aria-label="Part"><Glyph name="book" /></button>
        <i class="caret"></i>
        <i class="sep far"></i>
        <button class="q tight" aria-label="Touch Mode"><Glyph name="hand" /></button>
        <i class="sep"></i>
        <button class="q win"><Glyph name="window" /><span>Window</span><i class="caret"></i></button>
        <i class="caret barred"></i>
      </div>
      <h1>NX 10 - Modeling - [RUBBER PLATE.prt]</h1>
      <div class="sys">
        <strong class="siemens">SIEMENS</strong>
        <button aria-label="Minimize"><Glyph name="min" /></button>
        <button aria-label="Restore"><Glyph name="restore" /></button>
        <button aria-label="Close"><Glyph name="close" /></button>
      </div>
    </header>

    <nav class="tabs">
      <button class="file">File</button>
      <button class="home">Home</button>
      <button v-for="t in tabs" :key="t" class="tab">{{ t }}</button>
      <div class="tabs-right">
        <label class="find"><input type="text" placeholder="Find a Command" aria-label="Find a Command"><Glyph name="lens" size="15" /></label>
        <button aria-label="Full Screen"><Glyph name="fullscreen" /></button>
        <button aria-label="Minimize Ribbon"><Glyph name="up" /></button>
        <button aria-label="Help"><Glyph name="help" /></button>
        <button class="mdi" aria-label="Minimize part"><Glyph name="min" /></button>
        <button class="mdi" aria-label="Restore part"><Glyph name="restore" /></button>
        <button class="mdi" aria-label="Close part"><Glyph name="close" /></button>
      </div>
    </nav>

    <section class="ribbon">
      <div class="group direct">
        <div class="cells">
          <button class="big"><Glyph name="sketch" /><span>Sketch</span></button>
          <div class="gallery"><button v-for="g in gallery" :key="g" :aria-label="g"><Glyph :name="g" size="22" /></button></div>
          <div class="scroller"><i class="caret flip"></i><i class="caret"></i><i class="caret barred"></i></div>
        </div>
        <footer><span>Direct Sketch</span><i class="caret"></i></footer>
      </div>
      <div v-for="g in groups" :key="g.key" class="group" :class="g.key">
        <div class="cells">
          <template v-for="(c, i) in g.cols" :key="i">
            <div v-if="c.list" class="list">
              <button v-for="[icon, text, drop] in c.list" :key="text"><Glyph :name="icon" /><span>{{ text }}</span><i v-if="drop" class="caret"></i></button>
            </div>
            <button v-else class="big" :class="{ framed: c.framed }" :disabled="c.disabled">
              <Glyph :name="c.icon" />
              <span v-for="(l, k) in c.lines" :key="l">{{ l }}<i v-if="c.drop === 'inline' && k === 1" class="caret"></i></span>
              <i v-if="c.drop === 'below'" class="caret below"></i>
            </button>
          </template>
        </div>
        <footer><span>{{ g.label }}</span><i class="caret"></i></footer>
      </div>
      <i class="caret corner"></i>
    </section>

    <section class="selbar">
      <button class="menu"><Glyph name="menu" size="17" /><span><u>M</u>enu</span><i class="caret"></i></button>
      <i class="vline"></i>
      <label class="combo filter"><select aria-label="Selection filter"><option>No Selection Filter</option></select><i class="caret large"></i></label>
      <label class="combo scope"><select aria-label="Selection scope"><option>Entire Assembly</option></select><i class="caret large"></i></label>
      <template v-for="(t, i) in selectTools" :key="i">
        <i v-if="t === '^'" class="caret slot"></i>
        <i v-else-if="t === '|'" class="vline"></i>
        <button v-else class="tool" :class="{ on: t[0] === '*' }" :aria-label="t"><Glyph :name="t.replace('*', '')" size="16" /></button>
      </template>
      <i class="caret corner"></i>
    </section>

    <main class="work">
      <aside class="rail">
        <div v-for="s in rail" :key="s.key" :class="s.key">
          <button v-for="r in s.items" :key="r" :class="{ active: r === 'partNav' }" :aria-label="r"><Glyph :name="r" /></button>
        </div>
      </aside>

      <aside class="panel">
        <div class="panel-head"><h2>Part Navigator</h2><button aria-label="Maximize"><Glyph name="maximize" /></button></div>
        <div class="tree">
          <div class="tree-clip">
            <table>
              <thead><tr><th>Name<i class="caret sort"></i></th><th>Layer</th><th>Up ...</th><th>Com</th></tr></thead>
              <tbody>
                <tr v-for="r in roots" :key="r.name">
                  <td><div class="node"><span class="branch root"><b v-if="r.sign">{{ r.sign }}</b></span><Glyph v-if="r.ticked" name="tick" /><Glyph :name="r.icon" /><span>{{ r.name }}</span></div></td>
                  <td></td><td></td><td></td>
                </tr>
                <tr v-for="(f, i) in features" :key="i" :class="f.current ? 'current' : 'dim'">
                  <td><label class="node"><span class="branch leaf"></span><input type="checkbox" checked><Glyph :name="f.icon" /><span>{{ f.name }}</span></label></td>
                  <td>{{ f.layer }}</td><td><Glyph name="tick" /></td><td></td>
                </tr>
                <tr v-for="n in blankRows" :key="'b' + n"><td></td><td></td><td></td><td></td></tr>
              </tbody>
            </table>
          </div>
          <div class="hscroll">
            <svg width="16" height="15" viewBox="0 0 16 15"><path d="M10 3.500L6 7.500l4 4" fill="none" stroke="#444" stroke-width="2" /></svg>
            <span class="track"><i></i></span>
            <svg width="16" height="15" viewBox="0 0 16 15"><path d="M5 3.500l4 4-4 4" fill="none" stroke="#444" stroke-width="2" /></svg>
          </div>
        </div>
        <div class="splitter"></div>
      </aside>

      <section class="view">
        <svg class="plate" width="832" height="832" viewBox="0 0 832 832" role="img" aria-label="Rubber plate">
          <defs>
            <linearGradient id="rim" x1=".6" y1="0" x2=".45" y2="1">
              <stop offset="0" stop-color="#cfe5ec" /><stop offset=".2" stop-color="#cfe2e6" /><stop offset=".42" stop-color="#9cafb3" />
              <stop offset=".6" stop-color="#879799" /><stop offset="1" stop-color="#5c6867" />
            </linearGradient>
            <radialGradient id="bump" cx=".5" cy=".36" r=".64">
              <stop offset="0" stop-color="#f0fafb" /><stop offset=".3" stop-color="#b9cdd1" /><stop offset=".62" stop-color="#7b9197" /><stop offset="1" stop-color="#293d43" />
            </radialGradient>
          </defs>
          <circle cx="416" cy="416" r="411" fill="#a2b6ba" stroke="url(#rim)" stroke-width="8" />
          <circle cx="416" cy="416" r="414.500" fill="none" stroke="#51666c" stroke-width="1" />
          <circle cx="416" cy="416" r="407" fill="none" stroke="#2a444c" stroke-width="1" />
          <circle v-for="(b, i) in bumps" :key="i" :cx="b.x" :cy="b.y" r="5.900" fill="url(#bump)" />
        </svg>
        <svg class="triad" width="70" height="70" viewBox="0 0 70 70">
          <rect x="12" y="33" width="28" height="28" fill="#d2d2d2" stroke="#b9b9b9" />
          <path d="M12 60V22" stroke="#2b7a3c" stroke-width="2" /><path d="M8.500 25L12 13l3.500 12z" fill="#2f8c46" />
          <path d="M12 60h34" stroke="#a02830" stroke-width="2" /><path d="M42 56.500L57 60l-15 3.500z" fill="#c03038" />
          <circle cx="12" cy="60" r="4" fill="#1c3cc0" />
          <text x="8" y="12" fill="#4ba058">Y</text><text x="59" y="65" fill="#c85058">X</text>
        </svg>
      </section>
    </main>

    <footer class="status">
      <span>Select objects and use MB3, or double-click an object</span>
      <div><Glyph name="grayTile" /><Glyph name="fullscreen" /><Glyph name="globe" /></div>
    </footer>
    <div class="taskbar"><i></i><time>04:29 PM</time></div>

    <div class="watermark"><span class="han">莫西网</span><span>www.3dmox.com</span></div>
  </div>
</template>

<style>
body { margin: 0; }
</style>

<style scoped>
.app { display: flex; flex-direction: column; height: 100vh; overflow: hidden; position: relative; background: #fff; color: #222; font: 11px/13px "Noto Sans", "Open Sans", sans-serif; }
.app * { box-sizing: border-box; }
button { border: 0; padding: 0; margin: 0; background: none; font: inherit; color: inherit; display: flex; align-items: center; justify-content: center; }
svg { display: block; flex: none; }
h1, h2 { margin: 0; font: inherit; color: #111; }

.caret { display: inline-block; flex: none; width: 0; height: 0; border: 3px solid transparent; border-top: 4px solid #222; border-bottom: 0; }
.caret.large { border-width: 5px 4px 0; }
.caret.flip { border-top: 0; border-bottom: 3px solid #bbb; }
.caret.barred { position: relative; margin-top: 4px; }
.caret.barred::before { content: ""; position: absolute; left: -3px; top: -7px; width: 6px; height: 1px; background: #222; }

.titlebar { display: flex; align-items: center; height: 26px; flex: none; position: relative; }
.top-strip { position: absolute; top: 0; left: 840px; width: 240px; height: 1px; background: #dcdcdc; }
.top-strip i { position: absolute; left: 96px; width: 48px; height: 1px; background: #2f5a70; }
.quick { display: flex; align-items: center; width: 387px; flex: none; padding-left: 3px; }
.nx { width: 36px; font: bold 21px/26px "Open Sans", sans-serif; color: #8fa1a7; }
.sep { width: 1px; height: 20px; background: #e2e2e2; margin: 0 2px; flex: none; }
.sep.far { margin-left: 8px; }
.q { width: 24px; height: 22px; }
.q.wide { width: 29px; }
.q.tight { width: 18px; }
.quick .caret { margin-left: 3px; }
.q.win { width: auto; padding-left: 3px; }
.q.win span { margin: 0 2px 0 4px; }
.quick .barred { margin-left: 6px; }
.titlebar h1 { flex: 1; text-align: center; }
.sys { display: flex; align-items: center; width: 161px; flex: none; color: #333; }
.siemens { font: 800 13px/14px "Open Sans", sans-serif; color: #0d8a84; margin: 0 auto 0 6px; }
.sys button { width: 24px; height: 24px; }

.tabs { display: flex; height: 26px; flex: none; background: #c9d7d5; font-size: 12px; }
.tabs > button { color: #2b3634; }
.tabs > .tab { padding: 0 13px; margin-left: 1px; }
.tabs > .file { width: 59px; background: #56857c; color: #fff; margin-right: 2px; }
.tabs > .home { width: 61px; background: #fff; color: #3c7d99; border-top: 1px solid #aabcba; }
.tabs-right { display: flex; align-items: center; margin-left: auto; padding-right: 6px; }
.tabs-right button { width: 25px; height: 24px; }
.tabs-right .mdi { width: 21px; color: #111; }
.find { display: flex; align-items: center; width: 112px; height: 18px; background: #fff; border: 1px solid #999; margin-right: 7px; }
.find input { flex: 1; min-width: 0; border: 0; padding: 0 0 0 3px; font: 11px/15px "Open Sans", sans-serif; background: none; outline: 0; }
.find input::placeholder { color: #999; opacity: 1; }

.ribbon { display: flex; height: 86px; flex: none; border-bottom: 1px solid #d8d8d8; position: relative; }
.group { display: flex; flex-direction: column; border-right: 1px solid #dedede; }
.direct { width: 180px; }
.feature { width: 424px; padding-left: 7px; }
.sync { width: 200px; padding-left: 9px; }
.surface { width: 237px; padding-left: 8px; }
.assemblies { width: 249px; padding-left: 7px; }
.cells { display: grid; height: 70px; font-family: "Open Sans", "Noto Sans", sans-serif; }
.direct .cells { grid-template-columns: 60px 98px 18px; }
.feature .cells { grid-template-columns: 46px 46px 42px 109px 48px 78px 48px; }
.sync .cells { grid-template-columns: 40px 103px 46px; }
.surface .cells { grid-template-columns: 66px 114px 46px; }
.assemblies .cells { grid-template-columns: 56px 40px 1fr; }
.big { flex-direction: column; justify-content: flex-start; padding-top: 5px; white-space: nowrap; }
.big svg { margin-bottom: 5px; }
.big .caret { margin-left: 3px; vertical-align: middle; }
.big .caret.below { margin: 4px 0 0; }
.big.framed svg { box-sizing: border-box; width: 36px; height: 33px; padding: 8px 9px; margin-bottom: 4px; border: 1px solid #f0f0f0; }
.big:disabled { color: #c4c4c4; }
.list { display: flex; flex-direction: column; padding-left: 5px; }
.list button { height: 22px; justify-content: flex-start; gap: 5px; white-space: nowrap; }
.list .caret { margin-left: 3px; }
.gallery { display: grid; grid-template-columns: repeat(3, 1fr); margin: 5px 0 0; height: 66px; border: 1px solid #e0e0e0; }
.scroller { display: flex; flex-direction: column; align-items: center; justify-content: space-between; padding: 14px 0 9px; height: 70px; }
.group footer { display: flex; align-items: center; height: 15px; color: #3a7d93; padding-right: 8px; }
.group footer span { flex: 1; text-align: center; padding-right: 8px; }
.direct footer span { padding-right: 0; }
.group footer .caret { margin-bottom: 5px; }
.caret.corner { position: absolute; right: 6px; bottom: 8px; border-width: 3px 3px 0; }

.selbar { display: flex; align-items: center; height: 28px; flex: none; border-bottom: 1px solid #8c8c8c; position: relative; padding: 1px 0 0 9px; }
.menu { width: 66px; justify-content: flex-start; gap: 4px; }
.vline { width: 1px; height: 18px; background: #dcdcdc; flex: none; margin: 0 6px; }
.menu + .vline { margin: 0 12px 0 0; }
.combo { display: flex; align-items: center; position: relative; height: 17px; border: 1px solid #9a9a9a; margin-right: 9px; }
.combo select { appearance: none; width: 100%; height: 15px; border: 0; padding: 0 4px; font: 11px/15px "Open Sans", sans-serif; background: #fff; color: #111; outline: 0; }
.combo .caret { position: absolute; right: 4px; }
.filter { width: 122px; }
.scope { width: 127px; margin-right: 0; }
.tool { width: 23px; height: 22px; margin: 0 1px; flex: none; }
.tool.on { background: #c9d7d5; border: 1px solid #b4c4c2; }
.slot { margin: 0 3px; }

.work { display: flex; flex: 1; min-height: 0; }
.rail { width: 32px; flex: none; background: #dadada; border-right: 1px solid #a8a8a8; }
.rail button { width: 34px; height: 43px; }
.rail .top button { width: 29px; height: 41px; align-items: flex-start; padding-top: 6px; }
.rail .web { height: 161px; padding-top: 5px; }
.rail .web button { height: 54px; }
.rail .roles button { height: 42px; }
.rail .nav .active { width: 29px; margin-left: 3px; padding-left: 1px; background: #fff; border: 1px solid #b5b5b5; border-right: 0; }

.panel { width: 333px; flex: none; display: flex; flex-direction: column; padding: 0 9px 7px 7px; background: #fff; border-right: 1px solid #8c8c8c; }
.panel-head { display: flex; justify-content: space-between; align-items: center; height: 29px; padding: 2px 6px 0 3px; }
.tree { flex: 1; min-height: 0; display: flex; flex-direction: column; border: 1px solid #cfcfcf; border-bottom: 0; }
.tree-clip { flex: 1; min-height: 0; overflow: hidden; }
table { border-collapse: separate; border-spacing: 0; table-layout: fixed; width: 100%; }
th { height: 20px; padding: 0 0 0 6px; text-align: left; font-weight: normal; background: #efefef; border-right: 1px solid #d5d5d5; border-bottom: 1px solid #d5d5d5; white-space: nowrap; overflow: hidden; }
th:first-child { width: 200px; }
th:nth-child(2), th:nth-child(3) { width: 40px; }
th:last-child { border-right: 0; }
.sort { border-top: 0; border-bottom: 5px solid #222; border-left-width: 5px; border-right-width: 5px; margin: 0 0 1px 17px; }
td { height: 20px; padding: 0 0 0 5px; border-right: 1px solid #e8e8e8; border-bottom: 1px solid #e8e8e8; line-height: 15px; }
td:first-child { padding: 0; }
td:last-child { border-right: 0; }
tbody tr:nth-child(even) { background: #f9f9f9; }
.node { display: flex; align-items: center; height: 19px; white-space: nowrap; overflow: hidden; }
.node svg { margin-right: 3px; }
.node svg + svg { margin-left: -1px; }
.branch { align-self: stretch; flex: none; position: relative; }
.branch.root { width: 19px; }
.branch.root::before { content: ""; position: absolute; left: 9px; top: 0; bottom: 0; border-left: 1px dotted #aaa; }
.branch.root::after { content: ""; position: absolute; left: 10px; top: 9px; width: 7px; border-top: 1px dotted #aaa; }
.branch b { position: absolute; left: 5px; top: 5px; width: 9px; height: 9px; font: 11px/9px "Open Sans", sans-serif; text-align: center; color: #111; background: #fff; z-index: 1; }
tr:first-child .branch.root::before { top: 9px; }
tr:nth-child(4) .branch.root::before { bottom: 10px; }
.branch.leaf { width: 40px; }
.branch.leaf::before { content: ""; position: absolute; left: 28px; top: 0; bottom: -1px; border-left: 1px dotted #999; }
.branch.leaf::after { content: ""; position: absolute; left: 29px; top: 9px; width: 8px; border-top: 1px dotted #999; }
.current .branch.leaf::before { bottom: 9px; }
.node input { appearance: none; flex: none; width: 12px; height: 12px; margin: 0 2px 0 0; border: 1px solid #111; background: #fff; position: relative; }
.node input:checked::before { content: ""; position: absolute; inset: 0; background: #22a244; clip-path: polygon(0 50%, 20% 35%, 40% 55%, 85% 0, 100% 10%, 50% 100%, 30% 100%); }
.dim td { color: #999; }
.current td { font-weight: bold; color: #111; }
.hscroll { display: flex; height: 15px; flex: none; background: #f0f0f0; }
.hscroll .track { flex: 1; }
.hscroll .track i { display: block; width: 81%; height: 15px; background: #cdcdcd; }
.splitter { flex: none; height: 5px; margin-top: 2px; background: #dcdcdc; border: 1px solid #b5b5b5; }

.view { flex: 1; min-width: 0; display: flex; align-items: center; justify-content: center; position: relative; overflow: hidden; background: linear-gradient(#b4b3b4, #c8c7c8 28%, #d9d9d9 55%, #e6e6e6 72%, #e7e7e7); }
.triad { position: absolute; left: 55px; bottom: 58px; font: 11px "Open Sans", sans-serif; }

.status { display: flex; align-items: center; justify-content: space-between; height: 22px; flex: none; border-top: 1px solid #a8a8a8; padding: 0 28px 2px 3px; font-family: "Open Sans", sans-serif; font-weight: 600; color: #111; }
.status div { display: flex; gap: 4px; }
.status div svg:last-child { margin-left: 8px; }
.taskbar { height: 8px; flex: none; overflow: hidden; position: relative; background: linear-gradient(90deg, #243943, #22353f 50%, #18243f 90%); padding: 0 62px 0 392px; display: flex; justify-content: space-between; align-items: flex-start; }
.taskbar i { width: 48px; height: 8px; background: #4c6065; }
.taskbar time { color: #fff; font-size: 11px; line-height: 13px; padding-top: 3px; }

.watermark { position: absolute; inset: 0; display: flex; align-items: center; justify-content: center; padding-bottom: 14px; pointer-events: none; font: 74px/80px "Liberation Serif", serif; color: rgba(238, 238, 238, .92); text-shadow: 1px 2px 1px rgba(60, 60, 60, .7); }
.watermark > span:last-child { padding-top: 14px; }
.watermark .han { font: 200 80px/80px "Noto Sans CJK SC", sans-serif; }
</style>
